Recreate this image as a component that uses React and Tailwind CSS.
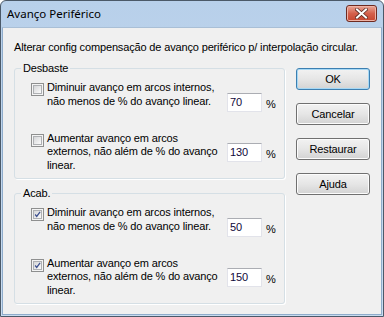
import React from 'react';

const groups = [
  {
    label: 'Desbaste',
    checked: false,
    rows: [
      { lines: ['Diminuir avanço em arcos internos,', 'não menos de % do avanço linear.'], value: '70' },
      { lines: ['Aumentar avanço em arcos', 'externos, não além de % do avanço', 'linear.'], value: '130' },
    ],
  },
  {
    label: 'Acab.',
    checked: true,
    rows: [
      { lines: ['Diminuir avanço em arcos internos,', 'não menos de % do avanço linear.'], value: '50' },
      { lines: ['Aumentar avanço em arcos', 'externos, não além de % do avanço', 'linear.'], value: '150' },
    ],
  },
];

function CheckBox({ checked }) {
  return (
    <div className="w-[13px] h-[13px] shrink-0 border border-[#8e8f8f] bg-[#f4f4f4] p-[1px]">
      <div className="w-full h-full border border-[#aeb0b3] bg-gradient-to-br from-[#d5d6d8] to-[#fbfbfb] flex items-center justify-center">
        {checked && (
          <svg width="9" height="9" viewBox="0 0 9 9">
            <path d="M1.5 4.5 L3.5 7 L7.8 1.2" fill="none" stroke="#3c4f8f" strokeWidth="1.6" />
          </svg>
        )}
      </div>
    </div>
  );
}

function Row({ row, checked, first }) {
  const multi = row.lines.length > 2;
  return (
    <div className={`flex items-start ${first ? '' : 'mt-[19px]'}`}>
      <div className="mt-[2px]">
        <CheckBox checked={checked} />
      </div>
      <div className="ml-[3px] w-[172px] leading-[13.5px] whitespace-nowrap">
        {row.lines.map((l, i) => (
          <div key={i}>{l}</div>
        ))}
      </div>
      <div className={`ml-[8px] ${multi ? 'mt-[11px]' : 'mt-[12px]'} w-[35px] h-[19px] bg-white border border-[#e2e3ea] border-t-[#abadb3] pl-[2px] leading-[17px] text-[#10083a]`}>
        {row.value}
      </div>
      <div className={`ml-[4px] ${multi ? 'mt-[14px]' : 'mt-[15px]'}`}>%</div>
    </div>
  );
}

function GroupBox({ group, className }) {
  return (
    <div className={`relative w-[271px] h-[111px] border border-[#d5dfe5] rounded-[3px] shadow-[1px_1px_0_#ffffff] pl-[16px] pt-[12px] ${className}`}>
      <div className="absolute -top-[7px] left-[6px] px-[2px] bg-[#f0f0f0] leading-[13px]">{group.label}</div>
      {group.rows.map((r, i) => (
        <Row key={i} row={r} checked={group.checked} first={i === 0} />
      ))}
    </div>
  );
}

function Button({ children, isDefault }) {
  return (
    <div
      className={`w-[74px] h-[22px] rounded-[3px] border flex items-center justify-center bg-gradient-to-b from-[#f2f2f2] via-[#e6e6e6] to-[#d3d3d3] ${
        isDefault ? 'border-[#3c7fb1] shadow-[inset_0_0_0_1px_#a6d8f5]' : 'border-[#707070] shadow-[inset_0_0_0_1px_#fcfcfc]'
      }`}
    >
      {children}
    </div>
  );
}

export default function App() {
  return (
    <div className="w-[384px] h-[317px] bg-white" style={{ fontFamily: '"Liberation Sans", Arial, sans-serif' }}>
      <div className="w-full h-full flex flex-col rounded-t-[6px] border border-[#4b5968] bg-gradient-to-b from-[#b8d0ea] to-[#c9dcf0] px-[1px] pb-[1px]">
        {/* title bar */}
        <div className="h-[26px] shrink-0 flex items-start justify-between pl-[5px] pr-[5px]">
          <span className="mt-[5px] text-[11.5px] leading-[16px] text-black" style={{ fontFamily: '"Noto Sans", "Open Sans", sans-serif' }}>
            Avanço Periférico
          </span>
          <div className="mt-[4px] w-[31px] h-[17px] rounded-[3px] border border-[#6e2a20] bg-gradient-to-b from-[#e8a596] via-[#d4604b] to-[#c6462f] flex items-center justify-center shadow-[inset_0_0_0_1px_#eeb3a6]">
            <svg width="13" height="11" viewBox="0 0 13 11">
              <path d="M2 1.5 L11 9.5 M11 1.5 L2 9.5" stroke="#5a2a22" strokeWidth="3.6" strokeLinecap="square" />
              <path d="M2 1.5 L11 9.5 M11 1.5 L2 9.5" stroke="#ffffff" strokeWidth="2" strokeLinecap="square" />
            </svg>
          </div>
        </div>

        {/* client */}
        <div className="flex-1 bg-[#f0f0f0] border border-[#8faccb] border-t-[#a9bfd6] text-[11px] tracking-[-0.15px] text-black pl-[11px]">
          <div className="mt-[13px] leading-[13px] whitespace-nowrap">
            Alterar config compensação de avanço periférico p/ interpolação circular.
          </div>
          <div className="flex mt-[14px]">
            <div className="flex flex-col">
              <GroupBox group={groups[0]} />
              <GroupBox group={groups[1]} className="mt-[14px]" />
            </div>
            <div className="ml-[11px] flex flex-col gap-[13px]">
              <Button isDefault>OK</Button>
              <Button>Cancelar</Button>
              <Button>Restaurar</Button>
              <Button>Ajuda</Button>
            </div>
          </div>
        </div>
      </div>
    </div>
  );
}
